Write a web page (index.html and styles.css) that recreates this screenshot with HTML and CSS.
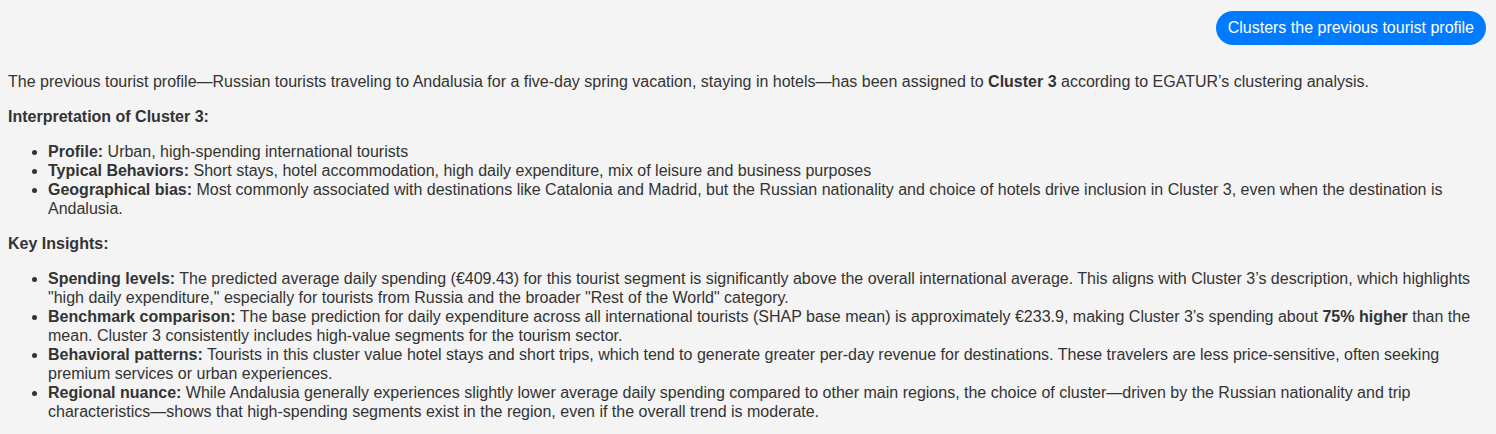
FILE: index.html
```html
<!DOCTYPE html>
<html lang="en">
<head>
<meta charset="utf-8">
<title>Cluster analysis</title>
<link rel="stylesheet" href="styles.css">
</head>
<body>
<div class="chat">
  <div class="user-row">
    <div class="bubble">Clusters the previous tourist profile</div>
  </div>
  <div class="answer">
    <p>The previous tourist profile—Russian tourists traveling to Andalusia for a five-day spring vacation, staying in hotels—has been assigned to <strong>Cluster 3</strong> according to EGATUR’s clustering analysis.</p>
    <p><strong>Interpretation of Cluster 3:</strong></p>
    <ul>
      <li><strong>Profile:</strong> Urban, high-spending international tourists</li>
      <li><strong>Typical Behaviors:</strong> Short stays, hotel accommodation, high daily expenditure, mix of leisure and business purposes</li>
      <li><strong>Geographical bias:</strong> Most commonly associated with destinations like Catalonia and Madrid, but the Russian nationality and choice of hotels drive inclusion in Cluster 3, even when the destination is Andalusia.</li>
    </ul>
    <p><strong>Key Insights:</strong></p>
    <ul>
      <li><strong>Spending levels:</strong> The predicted average daily spending (€409.43) for this tourist segment is significantly above the overall international average. This aligns with Cluster 3’s description, which highlights "high daily expenditure," especially for tourists from Russia and the broader "Rest of the World" category.</li>
      <li><strong>Benchmark comparison:</strong> The base prediction for daily expenditure across all international tourists (SHAP base mean) is approximately €233.9, making Cluster 3’s spending about <strong>75% higher</strong> than the mean. Cluster 3 consistently includes high-value segments for the tourism sector.</li>
      <li><strong>Behavioral patterns:</strong> Tourists in this cluster value hotel stays and short trips, which tend to generate greater per-day revenue for destinations. These travelers are less price-sensitive, often seeking premium services or urban experiences.</li>
      <li><strong>Regional nuance:</strong> While Andalusia generally experiences slightly lower average daily spending compared to other main regions, the choice of cluster—driven by the Russian nationality and trip characteristics—shows that high-spending segments exist in the region, even if the overall trend is moderate.</li>
    </ul>
  </div>
</div>
</body>
</html>
```

FILE: styles.css
```css
html, body {
  background: #f4f4f4;
}
body {
  margin: 0 8px;
  font-family: "Liberation Sans", Arial, sans-serif;
  font-size: 16px;
  line-height: 19px;
  color: #333333;
}
.chat {
  display: flex;
  flex-direction: column;
}
.user-row {
  display: flex;
  justify-content: flex-end;
  padding-top: 11px;
  padding-right: 2px;
}
.bubble {
  background: #007bff;
  color: #ffffff;
  padding: 8px 12px;
  line-height: 18px;
  border-radius: 17px;
}
.answer {
  padding-top: 11px;
}
.answer p {
  margin: 16px 0;
}
.answer ul {
  margin: 16px 0;
  padding-left: 40px;
}
.answer strong {
  font-weight: bold;
}
```
